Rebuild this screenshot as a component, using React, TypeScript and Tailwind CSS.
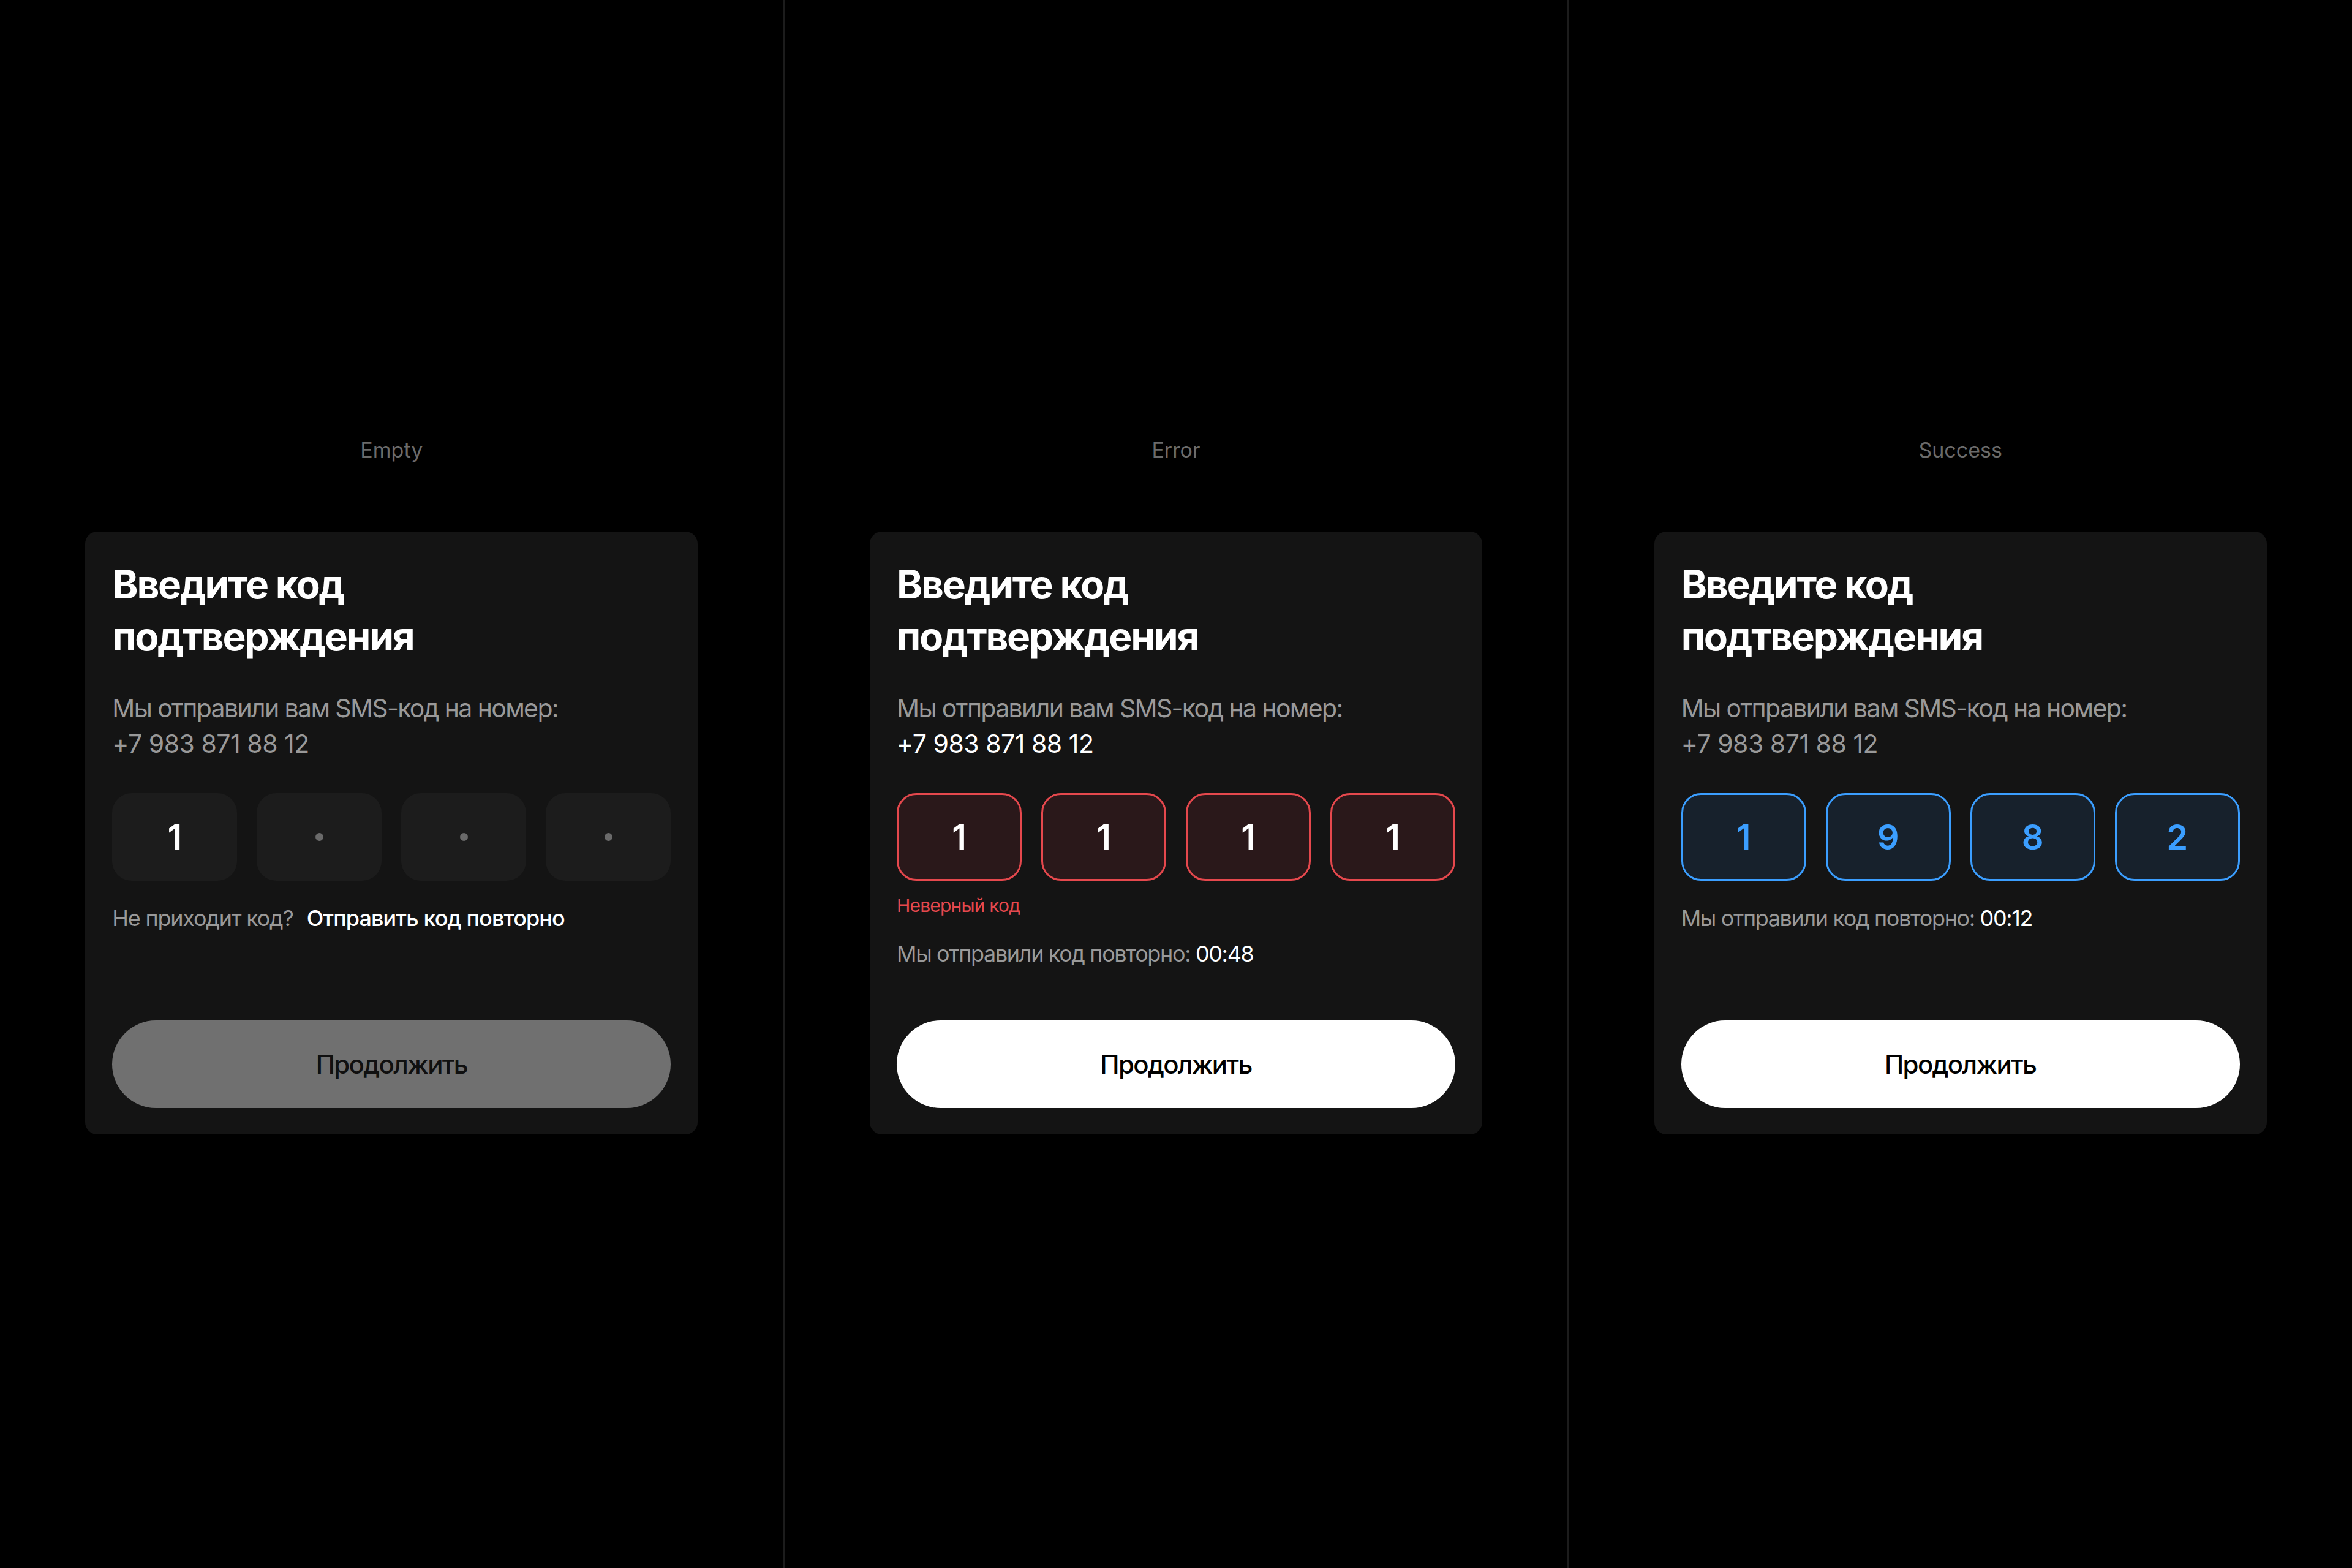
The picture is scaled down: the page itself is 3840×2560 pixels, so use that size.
import React from 'react';

type Variant = 'empty' | 'error' | 'success';

const states: { id: Variant; label: string; digits: string[]; timer?: string }[] = [
  { id: 'empty', label: 'Empty', digits: ['1', '', '', ''] },
  { id: 'error', label: 'Error', digits: ['1', '1', '1', '1'], timer: '00:48' },
  { id: 'success', label: 'Success', digits: ['1', '9', '8', '2'], timer: '00:12' },
];

function CodeBox({ value, variant }: { value: string; variant: Variant }) {
  const tone =
    variant === 'error'
      ? 'bg-[#2a181a] border-[3px] border-[#e5484d] text-white'
      : variant === 'success'
        ? 'bg-[#17212c] border-[3px] border-[#3b9eff] text-[#3b9eff]'
        : 'bg-[#1c1c1c] text-white';

  return (
    <div className={`flex h-[143px] flex-1 items-center justify-center rounded-[32px] ${tone}`}>
      {value ? (
        <span className="text-[56px] font-semibold leading-none">{value}</span>
      ) : (
        <span className="h-[13px] w-[13px] rounded-full bg-[#6a6a6a]" />
      )}
    </div>
  );
}

function Card({ state }: { state: (typeof states)[number] }) {
  const { id, digits, timer } = state;
  return (
    <div className="flex h-[984px] w-[1000px] flex-col rounded-[20px] bg-[#141414] px-[44px] pb-[43px] pt-[43px]">
      <h2 className="text-[64px] font-bold leading-[85px] tracking-[-0.035em] text-white">
        Введите код
        <br />
        подтверждения
      </h2>

      <p className="mt-[46px] text-[41px] leading-[58px] tracking-[-0.04em] text-[#999999]">
        Мы отправили вам SMS-код на номер:
        <br />
        <span className={`tracking-[-0.012em] ${id === 'error' ? 'text-white' : ''}`}>+7 983 871 88 12</span>
      </p>

      <div className="mt-[52px] flex gap-[32px]">
        {digits.map((d, i) => (
          <CodeBox key={i} value={d} variant={id} />
        ))}
      </div>

      {id === 'error' && (
        <p className="mt-[20px] text-[30px] leading-[40px] tracking-[-0.027em] text-[#e5484d]">Неверный код</p>
      )}

      {id === 'empty' ? (
        <p className="mt-[37px] text-[36px] leading-[48px] tracking-[-0.034em] text-[#999999]">
          Не приходит код?
          <span className="ml-[22px] font-medium tracking-[-0.025em] text-white">Отправить код повторно</span>
        </p>
      ) : (
        <p className={`${id === 'error' ? 'mt-[35px]' : 'mt-[37px]'} text-[36px] leading-[48px] tracking-[-0.038em] text-[#999999]`}>
          Мы отправили код повторно: <span className="text-white">{timer}</span>
        </p>
      )}

      <button
        className={`mt-auto h-[143px] w-full rounded-full text-[42px] font-medium tracking-[-0.04em] ${
          id === 'empty' ? 'bg-[#707070] text-[#101010]' : 'bg-white text-black'
        }`}
      >
        Продолжить
      </button>
    </div>
  );
}

export default function App() {
  return (
    <div className="flex h-[2560px] w-[3840px] bg-black font-['Inter',sans-serif]">
      {states.map((s, i) => (
        <div
          key={s.id}
          className={`flex flex-1 flex-col items-center pt-[711px] ${i < 2 ? 'border-r-2 border-[#1c1c1c]' : ''}`}
        >
          <div className="mb-[109px] text-[34px] leading-[48px] text-[#6b6b6b]">{s.label}</div>
          <Card state={s} />
        </div>
      ))}
    </div>
  );
}
